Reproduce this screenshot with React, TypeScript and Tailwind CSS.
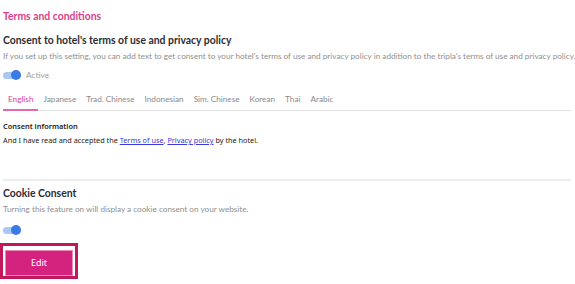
import React from 'react';

const tabs = ['English', 'Japanese', 'Trad. Chinese', 'Indonesian', 'Sim. Chinese', 'Korean', 'Thai', 'Arabic'];

const Toggle: React.FC = () => (
  <span className="relative inline-block w-[18px] h-[10px]">
    <span className="absolute left-0 top-[2px] w-[18px] h-[7px] rounded-full bg-[#a9c8f5]" />
    <span className="absolute right-0 top-0 w-[10px] h-[10px] rounded-full bg-[#3b7be8]" />
  </span>
);

export default function App() {
  const [active, setActive] = React.useState(0);

  return (
    <div className="w-[575px] h-[284px] bg-white overflow-hidden text-[#333]" style={{ fontFamily: 'Lato, "Noto Sans", sans-serif' }}>
      <div className="px-[3px] pt-[9px]">
        {/* Terms and conditions */}
        <h2 className="text-[10.4px] font-bold text-[#dd3d8c] leading-[15px]">Terms and conditions</h2>

        <h3 className="mt-[8px] text-[10.4px] font-bold text-[#2c2c33] leading-[16px]">
          Consent to hotel's terms of use and privacy policy
        </h3>
        <p className="mt-[2px] text-[8.2px] text-[#8f8f8f] leading-[13px] whitespace-nowrap">
          If you set up this setting, you can add text to get consent to your hotel's terms of use and privacy policy in addition to the tripla's terms of use and privacy policy.
        </p>

        <div className="mt-[6px] flex items-center gap-[5px] h-[12px]">
          <Toggle />
          <span className="text-[8.3px] text-[#a0a0a0]">Active</span>
        </div>

        {/* Language tabs */}
        <div className="mt-[12px] flex border-b border-[#e2e2e2] mr-[1px]">
          {tabs.map((tab, i) => (
            <button
              key={tab}
              onClick={() => setActive(i)}
              className={`px-[5px] pb-[4px] text-[8.2px] leading-[12px] -mb-px border-b-2 ${
                active === i ? 'text-[#dd3d8c] border-[#e46aa7]' : 'text-[#8a8a8a] border-transparent'
              }`}
            >
              {tab}
            </button>
          ))}
        </div>

        <div className="mt-[9px]" style={{ fontFamily: '"Noto Sans", sans-serif' }}>
          <div className="text-[7.4px] font-semibold text-[#222] leading-[12px]">Consent information</div>
          <p className="mt-[2px] text-[7.3px] text-[#222] leading-[12px]">
            And I have read and accepted the{' '}
            <a href="#" className="text-[#3b3bdd] underline">Terms of use</a>,{' '}
            <a href="#" className="text-[#3b3bdd] underline">Privacy policy</a> by the hotel.
          </p>
        </div>

        <div className="mt-[33px] border-t-2 border-[#ececec] mr-[1px]" />

        {/* Cookie consent */}
        <h3 className="mt-[4px] text-[10.4px] font-bold text-[#2c2c33] leading-[16px]">Cookie Consent</h3>
        <p className="mt-[2px] text-[8.2px] text-[#8f8f8f] leading-[13px]">
          Turning this feature on will display a cookie consent on your website.
        </p>

        <div className="mt-[8px] flex items-center h-[12px]">
          <Toggle />
        </div>
      </div>

      <div className="mt-[7px] w-[78px] h-[36px] border-[3px] border-[#c2185b] bg-white p-[2px]">
        <button className="w-full h-full bg-[#d4237f] border border-[#e889b9] text-white text-[9px]" style={{ fontFamily: '"Noto Sans", sans-serif' }}>
          Edit
        </button>
      </div>
    </div>
  );
}
